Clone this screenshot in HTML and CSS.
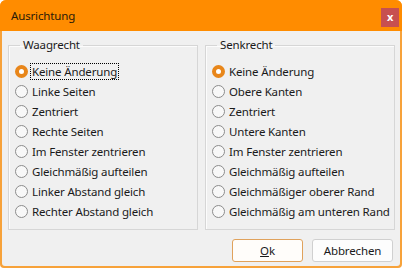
FILE: index.html
```html
<!DOCTYPE html>
<html lang="de">

<head>
    <meta charset="UTF-8">
    <meta name="viewport" content="width=device-width, initial-scale=1.0">
    <title>Ausrichtung</title>
    <link rel="stylesheet" href="styles.css">
</head>

<body>
    <div class="window">
        <div class="titlebar">
            <span class="title">Ausrichtung</span>
            <span class="close-btn">x</span>
        </div>
        <div class="content">
            <div class="groups">
                <fieldset class="group">
                    <legend>Waagrecht</legend>
                    <div class="option"><span class="radio checked"></span><span class="label focused">Keine Änderung</span></div>
                    <div class="option"><span class="radio"></span><span class="label">Linke Seiten</span></div>
                    <div class="option"><span class="radio"></span><span class="label">Zentriert</span></div>
                    <div class="option"><span class="radio"></span><span class="label">Rechte Seiten</span></div>
                    <div class="option"><span class="radio"></span><span class="label">Im Fenster zentrieren</span></div>
                    <div class="option"><span class="radio"></span><span class="label">Gleichmäßig aufteilen</span></div>
                    <div class="option"><span class="radio"></span><span class="label">Linker Abstand gleich</span></div>
                    <div class="option"><span class="radio"></span><span class="label">Rechter Abstand gleich</span></div>
                </fieldset>
                <fieldset class="group">
                    <legend>Senkrecht</legend>
                    <div class="option"><span class="radio checked"></span><span class="label">Keine Änderung</span></div>
                    <div class="option"><span class="radio"></span><span class="label">Obere Kanten</span></div>
                    <div class="option"><span class="radio"></span><span class="label">Zentriert</span></div>
                    <div class="option"><span class="radio"></span><span class="label">Untere Kanten</span></div>
                    <div class="option"><span class="radio"></span><span class="label">Im Fenster zentrieren</span></div>
                    <div class="option"><span class="radio"></span><span class="label">Gleichmäßig aufteilen</span></div>
                    <div class="option"><span class="radio"></span><span class="label">Gleichmäßiger oberer Rand</span></div>
                    <div class="option"><span class="radio"></span><span class="label">Gleichmäßig am unteren Rand</span></div>
                </fieldset>
            </div>
            <div class="buttons">
                <button class="btn btn-ok"><u>O</u>k</button>
                <button class="btn">Abbrechen</button>
            </div>
        </div>
    </div>
</body>

</html>
```

FILE: styles.css
```css
body {
    margin: 0;
    background-color: #fff;
    font-family: "Noto Sans", "Open Sans", sans-serif;
    font-size: 11.5px;
    letter-spacing: -0.15px;
    color: #1a1a1a;
}

.window {
    width: 402px;
    height: 268px;
    display: flex;
    flex-direction: column;
    border-radius: 6px 6px 4px 4px;
    overflow: hidden;
    background-color: #f7a23a;
}

.titlebar {
    height: 31px;
    flex: none;
    display: flex;
    align-items: flex-start;
    justify-content: space-between;
    background-color: #ff8c00;
}

.title {
    margin: 8px 0 0 11px;
    line-height: 16px;
    color: #2a1a08;
}

.close-btn {
    width: 18px;
    height: 19px;
    margin: 8px 3px 0 0;
    background-color: #c75050;
    color: #fff;
    font-size: 11px;
    font-weight: bold;
    line-height: 17px;
    text-align: center;
}

.content {
    flex: 1;
    margin: 0 2px 2px;
    padding: 6px 6px 4px 6px;
    background-color: #f0f0f0;
    border-radius: 0 0 3px 3px;
    display: flex;
    flex-direction: column;
}

.groups {
    display: grid;
    grid-template-columns: 190px 190px;
    gap: 7px;
}

.group {
    margin: 0;
    padding: 8px 6px 8px 6px;
    border: 1px solid #d6d6d6;
    box-shadow: inset 1px 1px 0 #fcfcfc;
    min-width: 0;
    overflow: hidden;
}

.group legend {
    margin-left: 5px;
    padding: 0 3px;
    line-height: 16px;
}

.option {
    height: 20px;
    display: flex;
    align-items: center;
    white-space: nowrap;
}

.radio {
    flex: none;
    width: 13px;
    height: 13px;
    box-sizing: border-box;
    border: 1px solid #8c8c8c;
    border-radius: 50%;
    background-color: #f8f8f8;
    margin-right: 2px;
}

.radio.checked {
    border: 4px solid #e8861a;
    background-color: #fff;
}

.label {
    padding: 0 1px;
    line-height: 15px;
    border: 1px dotted transparent;
}

.label.focused {
    border-color: #000;
}

.buttons {
    margin-top: 9px;
    display: flex;
    justify-content: flex-end;
    gap: 9px;
    padding-right: 1px;
}

.btn {
    height: 23px;
    padding: 0;
    font-family: inherit;
    font-size: 11.5px;
    letter-spacing: -0.15px;
    color: #1a1a1a;
    background-color: #fdfdfd;
    border: 1px solid #d0d0d0;
    border-radius: 3px;
    width: 81px;
}

.btn-ok {
    width: 71px;
    border-color: #e0a25c;
    background-color: #fffdfa;
}
```
